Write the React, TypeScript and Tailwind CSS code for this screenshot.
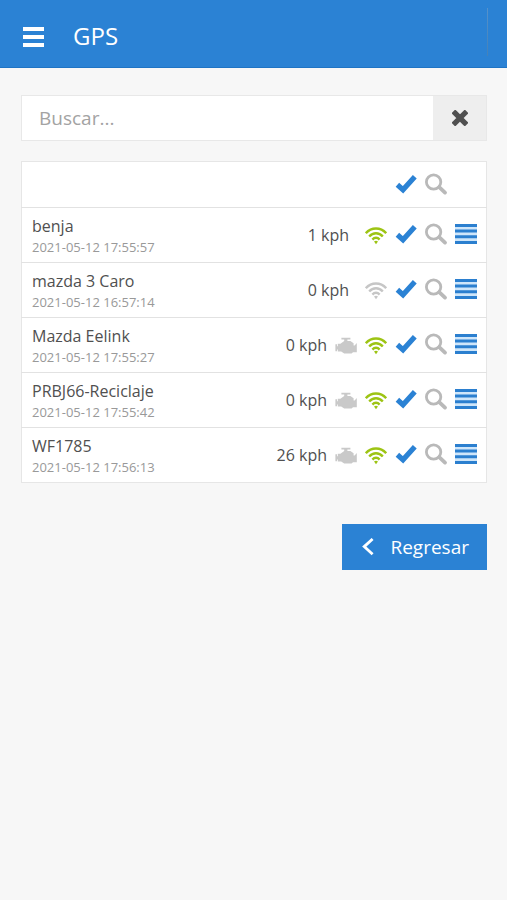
import { useState } from 'react'

const devices = [
  { name: 'benja', date: '2021-05-12 17:55:57', speed: 1, engine: false, online: true },
  { name: 'mazda 3 Caro', date: '2021-05-12 16:57:14', speed: 0, engine: false, online: false },
  { name: 'Mazda Eelink', date: '2021-05-12 17:55:27', speed: 0, engine: true, online: true },
  { name: 'PRBJ66-Reciclaje', date: '2021-05-12 17:55:42', speed: 0, engine: true, online: true },
  { name: 'WF1785', date: '2021-05-12 17:56:13', speed: 26, engine: true, online: true },
]

function CheckIcon() {
  return (
    <svg viewBox="0 0 22 22" className="size-[22px] fill-none stroke-[#2b82d4]" aria-hidden="true">
      <path d="M2.4 10.8 8 15.8 19.8 2.8" strokeWidth="5.2" />
    </svg>
  )
}

function SearchIcon() {
  return (
    <svg viewBox="0 0 22 22" className="size-[22px] overflow-visible fill-none stroke-[#b9b9b9]" aria-hidden="true">
      <circle cx="8.6" cy="8" r="7.2" strokeWidth="2.8" />
      <path d="m14.2 13.2 5.8 5.4" strokeWidth="3.8" strokeLinecap="round" />
    </svg>
  )
}

function ListIcon() {
  return (
    <svg viewBox="0 0 22 22" className="size-[22px]" aria-hidden="true">
      <path d="M0 0h22v20H0z" fill="#cfe6fa" />
      <path d="M0 0h22v3H0zM0 5.6h22v3H0zM0 11.3h22v3H0zM0 17h22v3H0z" fill="#2b7fcf" />
    </svg>
  )
}

function WifiIcon({ online }: { online: boolean }) {
  return (
    <svg
      viewBox="0 0 22 22"
      role="img"
      aria-label={online ? 'En línea' : 'Sin conexión'}
      className={online ? 'size-[22px] text-[#9dc414]' : 'size-[22px] text-[#c6c6c6]'}
    >
      <g fill="none" stroke="currentColor" strokeWidth="2.4">
        <path d="M.8 9.2C6.4 3 15.6 3 21.2 9.2" />
        <path d="M4.2 12.5c3.8-4.3 9.8-4.3 13.6 0" />
        <path d="M7.4 15.6c2.1-2.4 5.1-2.4 7.2 0" />
      </g>
      <path d="M9 17.6q2-1.6 4 0l-2 2.6z" fill="currentColor" />
    </svg>
  )
}

function EngineIcon() {
  return (
    <svg viewBox="0 0 22 22" role="img" aria-label="Motor" className="size-[22px] fill-[#c9c9c9]">
      <path d="M6.4 3.8h9v1.6h-3V7h3l3.2 2.2v2.4h1L21.8 9v9.2H18l-1.4 1.2H9.2l-3-1.8H2.8v-2.2H2v1.8H.4V10.2H2v2h.8V9.8h2.6L9.2 7V5.4H6.4z" />
    </svg>
  )
}

export default function App() {
  const [search, setSearch] = useState('')

  const rows = devices.filter((d) => d.name.toLowerCase().includes(search.toLowerCase()))

  return (
    <div className="min-h-screen bg-[#f7f7f7] font-['Open_Sans','Noto_Sans',sans-serif] text-[#505050]">
      <header className="flex h-[68px] items-center border-b border-[#1f74c4] bg-[#2b82d4] pt-1 pr-[19px] pl-[23px] text-white">
        <button type="button" aria-label="Menú">
          <svg viewBox="0 0 21 22" className="h-[22px] w-[21px] fill-white" aria-hidden="true">
            <path d="M0 2h21v4H0zM0 10h21v4H0zM0 18h21v4H0z" />
          </svg>
        </button>
        <h1 className="ml-[29px] text-2xl">GPS</h1>
        <div className="mb-2 ml-auto h-12 w-px bg-linear-to-b from-[#5592cc] to-[#4481b8]" />
      </header>

      <main className="pt-[27px] pr-5 pl-[21px]">
        <div className="flex h-[46px] border border-[#e8e8e8] bg-white">
          <input
            type="text"
            aria-label="Buscar"
            placeholder="Buscar..."
            value={search}
            onChange={(e) => setSearch(e.target.value)}
            className="min-w-0 flex-1 px-[17px] text-[19px] outline-none placeholder:text-[#a3a3a3]"
          />
          <button
            type="button"
            aria-label="Limpiar"
            onClick={() => setSearch('')}
            className="flex w-[53px] items-center justify-center bg-[#eeeeee]"
          >
            <svg viewBox="0 0 16 16" className="size-4 stroke-[#505050]" aria-hidden="true">
              <path d="m3.2 3.2 9.6 9.6M12.8 3.2 3.2 12.8" strokeWidth="5.2" strokeLinecap="square" strokeLinejoin="round" />
            </svg>
          </button>
        </div>

        <table className="mt-5 w-full border-collapse border border-[#e6e6e6] bg-white">
          <thead>
            <tr className="h-[46px]">
              <th aria-label="Dispositivo" />
              <th className="pr-[9px]">
                <div className="flex items-center justify-end gap-2 pr-[30px]">
                  <button type="button" aria-label="Seleccionar todos"><CheckIcon /></button>
                  <button type="button" aria-label="Buscar todos"><SearchIcon /></button>
                </div>
              </th>
            </tr>
          </thead>
          <tbody>
            {rows.map((d) => (
              <tr key={d.name} className="h-[55px] border-t border-[#e2e2e2]">
                <td className="pt-px pl-[10px]">
                  <div className="text-base leading-[22px]">{d.name}</div>
                  <div className="text-[13px] leading-5 text-[#999999]">{d.date}</div>
                </td>
                <td className="pr-[9px]">
                  <div className="flex items-center justify-end gap-2">
                    <span className={d.engine ? 'text-base' : 'mr-2 text-base'}>{d.speed} kph</span>
                    {d.engine && <EngineIcon />}
                    <WifiIcon online={d.online} />
                    <button type="button" aria-label={`Seleccionar ${d.name}`}><CheckIcon /></button>
                    <button type="button" aria-label={`Ver ${d.name}`}><SearchIcon /></button>
                    <button type="button" aria-label={`Opciones de ${d.name}`}><ListIcon /></button>
                  </div>
                </td>
              </tr>
            ))}
          </tbody>
        </table>

        <div className="mt-[41px] flex justify-end">
          <button type="button" className="flex h-[46px] items-center bg-[#2b82d4] pr-[18px] pl-5 text-[19px] text-white">
            <svg viewBox="0 0 12 18" className="mr-4 h-[18px] w-3 fill-none stroke-white" aria-hidden="true">
              <path d="m10.6 1-8.4 7.6 8.4 7.6" strokeWidth="2.8" />
            </svg>
            Regresar
          </button>
        </div>
      </main>
    </div>
  )
}
